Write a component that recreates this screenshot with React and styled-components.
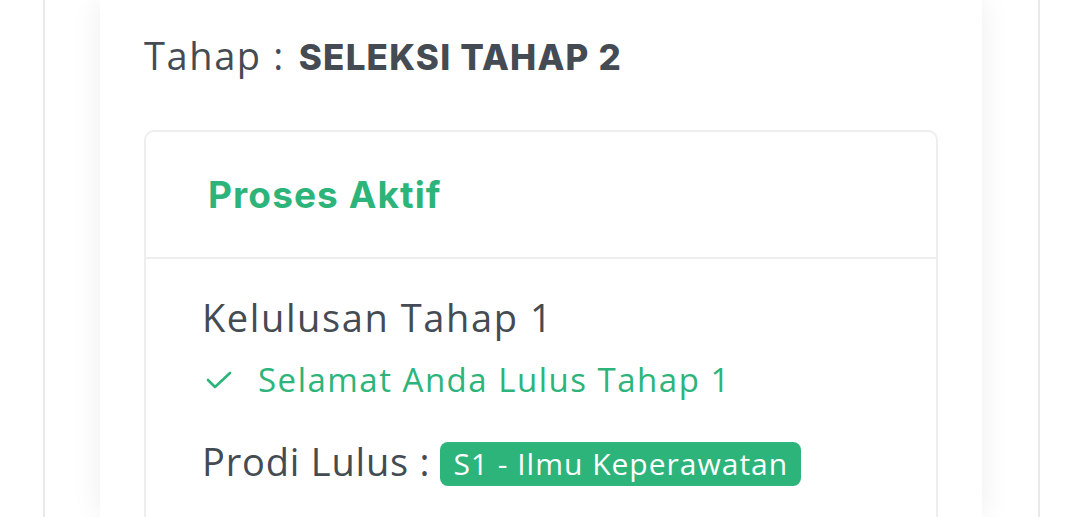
import React from "react";
import styled, { createGlobalStyle } from "styled-components";

const GlobalStyle = createGlobalStyle`
  html, body { margin: 0; padding: 0; background: #ffffff; overflow: hidden; }
  * { box-sizing: border-box; }
`;

const GREEN = "#2db47a";
const TEXT = "#454b53";

const Frame = styled.div`
  margin-left: 43px;
  width: 997px;
  height: 517px;
  border-left: 2px solid #e9e9e9;
  border-right: 2px solid #e9e9e9;
  padding: 0 56px 0 55px;
`;

const Panel = styled.div`
  height: 100%;
  background: #ffffff;
  box-shadow: 0 0 28px rgba(0, 0, 0, 0.07);
  padding: 30px 44px 0 44px;
  font-family: "Open Sans", "Noto Sans", sans-serif;
`;

const StageLine = styled.div`
  font-size: 38px;
  line-height: 50px;
  color: ${TEXT};
  font-weight: 400;
  letter-spacing: 1.6px;
`;

const Strong = styled.span`
  font-family: Inter, "Noto Sans", sans-serif;
  font-weight: 800;
  font-size: 35px;
  letter-spacing: 1.2px;
  margin-left: 14px;
`;

const Card = styled.div`
  margin-top: 48px;
  border: 2px solid #eeeeee;
  border-bottom: none;
  border-radius: 10px 10px 0 0;
  height: 400px;
`;

const CardHeader = styled.div`
  height: 127px;
  display: flex;
  align-items: center;
  padding-left: 62px;
  border-bottom: 2px solid #eeeeee;
`;

const CardTitle = styled.div`
  font-family: Inter, "Noto Sans", sans-serif;
  font-weight: 700;
  font-size: 37px;
  letter-spacing: 1.1px;
  color: ${GREEN};
`;

const CardBody = styled.div`
  padding: 30px 56px 0 56px;
  display: flex;
  flex-direction: column;
`;

const Heading = styled.div`
  font-size: 38px;
  line-height: 56px;
  letter-spacing: 1.6px;
  color: ${TEXT};
`;

const StatusRow = styled.div`
  display: flex;
  align-items: center;
  gap: 26px;
  margin-top: 10px;
  padding-left: 4px;
  color: ${GREEN};
  font-size: 33px;
  line-height: 50px;
  letter-spacing: 1.5px;
`;

const ResultRow = styled.div`
  display: flex;
  align-items: center;
  gap: 10px;
  margin-top: 30px;
  font-size: 38px;
  line-height: 50px;
  letter-spacing: 0.8px;
  color: ${TEXT};
`;

const Badge = styled.span`
  display: inline-flex;
  align-items: center;
  height: 44px;
  padding: 0 13px;
  border-radius: 8px;
  background: ${GREEN};
  color: #ffffff;
  font-size: 30px;
  font-weight: 500;
  letter-spacing: 1px;
  margin-top: 7px;
`;

const Check = () => (
  <svg width="26" height="20" viewBox="0 0 26 20" fill="none">
    <polyline
      points="2,10 9,17 24,3"
      stroke={GREEN}
      strokeWidth="2.6"
      strokeLinecap="round"
      strokeLinejoin="round"
    />
  </svg>
);

export default function App() {
  return (
    <>
      <GlobalStyle />
      <Frame>
        <Panel>
          <StageLine>
            Tahap :<Strong>SELEKSI TAHAP 2</Strong>
          </StageLine>
          <Card>
            <CardHeader>
              <CardTitle>Proses Aktif</CardTitle>
            </CardHeader>
            <CardBody>
              <Heading>Kelulusan Tahap 1</Heading>
              <StatusRow>
                <Check />
                <span>Selamat Anda Lulus Tahap 1</span>
              </StatusRow>
              <ResultRow>
                <span>Prodi Lulus :</span>
                <Badge>S1 - Ilmu Keperawatan</Badge>
              </ResultRow>
            </CardBody>
          </Card>
        </Panel>
      </Frame>
    </>
  );
}
